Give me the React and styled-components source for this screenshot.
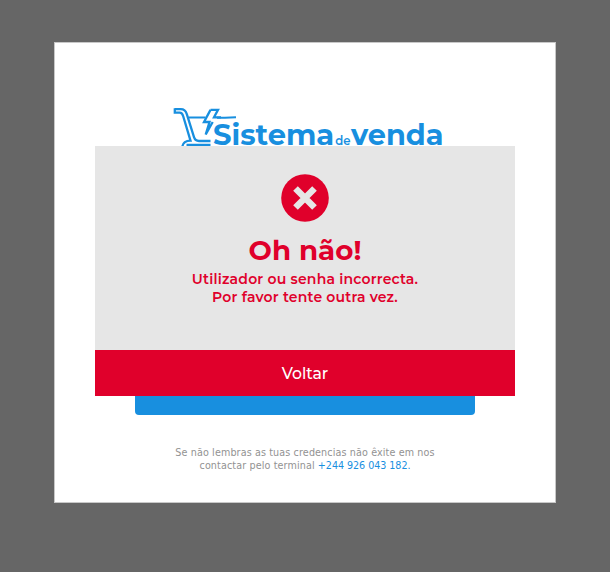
import React from "react";
import styled, { createGlobalStyle } from "styled-components";

const Global = createGlobalStyle`
  * { box-sizing: border-box; }
  body { margin: 0; background: #666; }
`;

const Page = styled.div`
  width: 610px;
  height: 572px;
  padding: 42px 54px 0;
  overflow: hidden;
  background: #666;
  font-family: Montserrat, Inter, sans-serif;
`;

const Card = styled.main`
  position: relative;
  width: 502px;
  height: 461px;
  padding-top: 64px;
  border: 1px solid #c8c8c8;
  background: #fff;
  display: flex;
  flex-direction: column;
  align-items: center;
`;

const Brand = styled.svg`
  display: block;
  width: 280px;
  height: 60px;
  margin-left: 16px;
  fill: #188fdf;
  font-weight: 700;
`;

const LoginButton = styled.button`
  width: 340px;
  height: 46px;
  margin-top: 202px;
  border: 0;
  border-radius: 4px;
  background: #188fdf;
`;

const Help = styled.p`
  margin: 31px 0 0;
  color: #929292;
  font: 9.6px/13px "DejaVu Sans", sans-serif;
  letter-spacing: 0.12px;
  text-align: center;
  white-space: nowrap;
`;

const Phone = styled.a`
  color: #188fdf;
  letter-spacing: -0.05px;
`;

const Dialog = styled.section`
  position: absolute;
  top: 103px;
  left: 40px;
  width: 420px;
  height: 250px;
  display: flex;
  flex-direction: column;
  align-items: center;
  background: #e6e6e6;
  color: #e0002b;
`;

const ErrorIcon = styled.svg`
  width: 48px;
  height: 48px;
  margin-top: 28px;
`;

const Title = styled.h1`
  margin: 11px 0 0;
  font-size: 27.7px;
  line-height: 34px;
  font-weight: 700;
`;

const Message = styled.p`
  margin: 3px 0 0;
  font-size: 14px;
  line-height: 18px;
  font-weight: 600;
  letter-spacing: 0.2px;
  text-align: center;
  white-space: nowrap;
`;

const BackButton = styled.button`
  width: 100%;
  height: 46px;
  margin-top: auto;
  border: 0;
  background: #e0002b;
  color: #fff;
  font: 500 15.7px Montserrat, Inter, sans-serif;
`;

export default function App() {
  return (
    <>
      <Global />
      <Page>
        <Card>
          <Brand viewBox="173 107 280 60">
            <g fill="none" stroke="#188fdf" strokeWidth="2.3">
              <path d="M174.800 109.200h6q4.500 0 6 5l7.200 23q1.200 3.800 5 3.800h11.500" />
              <path d="M174.800 108.200v4.500h4.900q2.500 0 3.500 3.500l7.300 24.500q-7 0-8.300 6" />
              <path d="M186.500 144.900h24" />
              <path strokeWidth="2" d="M188.500 117.500h17M217 117.700h8l11-.4" />
              <path d="M210.500 109.900h7.500l-4 7.400h7M210.500 109.900l-6.500 12.100h5.500l-3.800 12.500 7-12.500" />
            </g>
            <text x="213" y="145" fontSize="29.500" textLength="121.200" lengthAdjust="spacingAndGlyphs">Sistema</text>
            <text x="335.200" y="145" fontSize="12.500" fontWeight="600" textLength="15.300" lengthAdjust="spacingAndGlyphs">de</text>
            <text x="351" y="145" fontSize="29.500" textLength="92.500" lengthAdjust="spacingAndGlyphs">venda</text>
          </Brand>
          <LoginButton aria-label="Entrar" />
          <Help>
            Se não lembras as tuas credencias não êxite em nos
            <br />
            contactar pelo terminal <Phone>+244 926 043 182.</Phone>
          </Help>
          <Dialog role="alertdialog">
            <ErrorIcon viewBox="0 0 48 48">
              <circle cx="24" cy="24" r="23.800" fill="#e0002b" />
              <path d="M14.500 14.500l19 19M33.500 14.500l-19 19" stroke="#e6e6e6" strokeWidth="6.500" />
            </ErrorIcon>
            <Title>Oh não!</Title>
            <Message>
              Utilizador ou senha incorrecta.
              <br />
              Por favor tente outra vez.
            </Message>
            <BackButton>Voltar</BackButton>
          </Dialog>
        </Card>
      </Page>
    </>
  );
}
